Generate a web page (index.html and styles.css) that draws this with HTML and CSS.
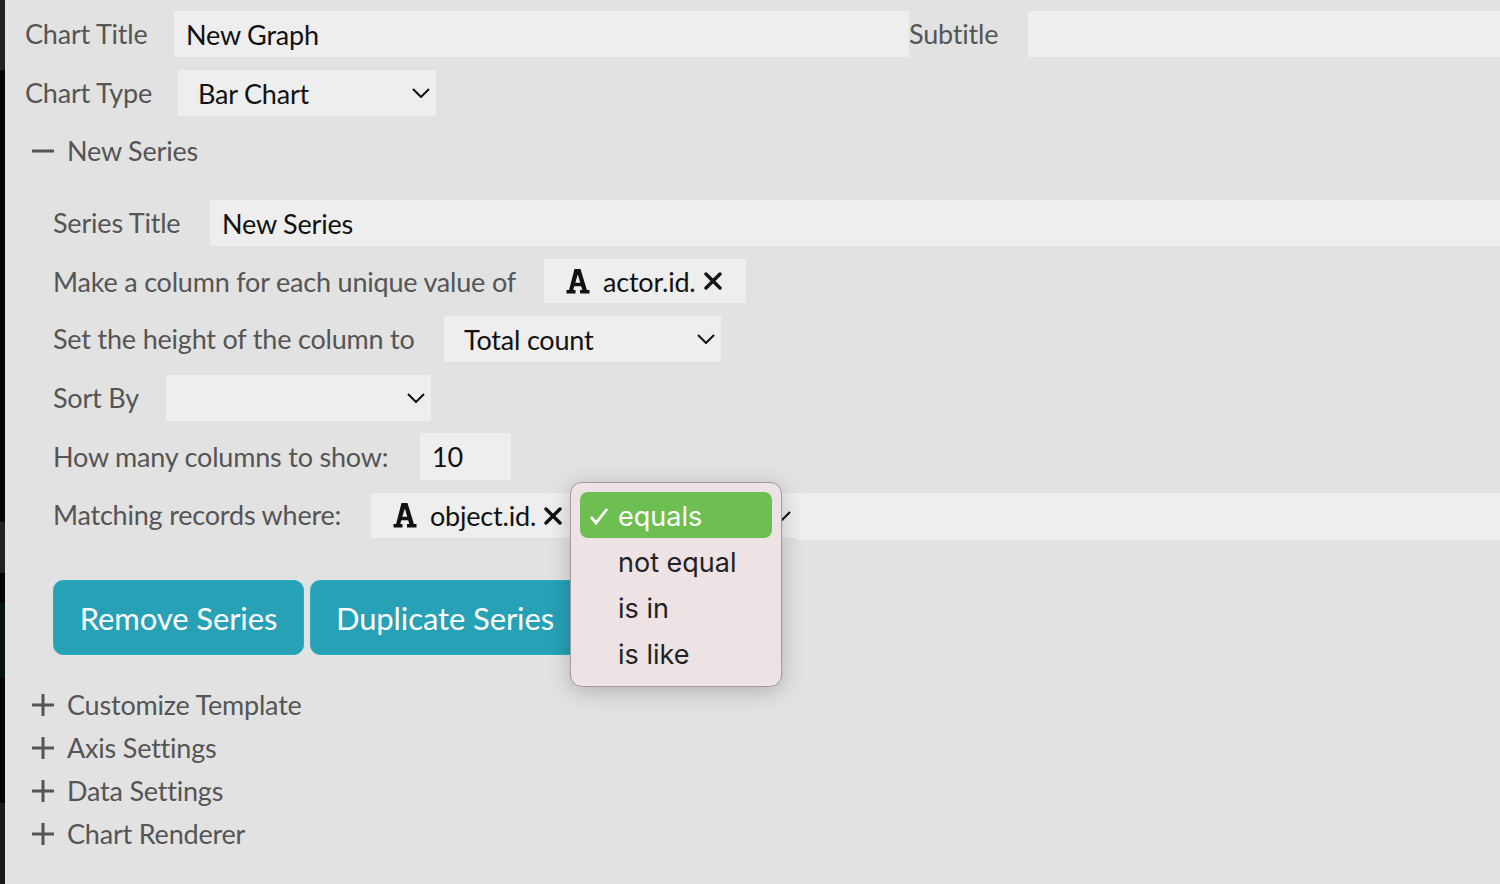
FILE: index.html
```html
<!DOCTYPE html>
<html lang="en">
<head>
<meta charset="utf-8">
<title>Chart editor</title>
<link rel="stylesheet" href="styles.css">
</head>
<body>
<div class="strip"></div>
<main class="panel">
  <div class="row row-top">
    <label class="label">Chart Title</label>
    <div class="field title-field">New Graph</div>
    <label class="label subtitle-label">Subtitle</label>
    <div class="field grow"></div>
  </div>
  <div class="row row-type">
    <label class="label">Chart Type</label>
    <div class="select type-select"><span>Bar Chart</span>
      <svg class="chev" viewBox="0 0 18 10"><path d="M1 1l8 8 8-8"/></svg></div>
  </div>
  <div class="toggle open">
    <svg class="pm" viewBox="0 0 22 22"><path d="M0 11h22"/></svg><span>New Series</span>
  </div>
  <section class="series">
    <div class="row s-title">
      <label class="label">Series Title</label>
      <div class="field grow">New Series</div>
    </div>
    <div class="row s-unique">
      <label class="label">Make a column for each unique value of</label>
      <div class="chip unique-chip">
        <svg class="font-icon" viewBox="0 0 24 25"><path fill-rule="evenodd" d="M8.5 0h6l6.4 21h2.6v3.500h-9.500V21h2.300l-1.100-3.800H8.300L7.200 21h2.300v3.500H.5V21h2.600zM9.300 13.700h5L11.800 5.500z"/></svg>
        <span>actor.id.</span>
        <svg class="x" viewBox="0 0 18 18"><path d="M2 2l14 14M16 2L2 16"/></svg>
      </div>
    </div>
    <div class="row s-height">
      <label class="label">Set the height of the column to</label>
      <div class="select height-select"><span>Total count</span>
        <svg class="chev" viewBox="0 0 18 10"><path d="M1 1l8 8 8-8"/></svg></div>
    </div>
    <div class="row s-sort">
      <label class="label">Sort By</label>
      <div class="select sort-select"><span></span>
        <svg class="chev" viewBox="0 0 18 10"><path d="M1 1l8 8 8-8"/></svg></div>
    </div>
    <div class="row s-count">
      <label class="label">How many columns to show:</label>
      <div class="field count-field">10</div>
    </div>
    <div class="row s-match">
      <label class="label">Matching records where:</label>
      <div class="match-group">
        <div class="match-chip">
          <svg class="font-icon" viewBox="0 0 24 25"><path fill-rule="evenodd" d="M8.5 0h6l6.4 21h2.6v3.500h-9.500V21h2.300l-1.100-3.800H8.300L7.200 21h2.300v3.500H.5V21h2.600zM9.300 13.700h5L11.800 5.500z"/></svg>
          <span>object.id.</span>
          <svg class="x" viewBox="0 0 18 18"><path d="M2 2l14 14M16 2L2 16"/></svg>
        </div>
        <svg class="chev" viewBox="0 0 18 10"><path d="M1 1l8 8 8-8"/></svg>
      </div>
      <div class="field grow match-value"></div>
    </div>
    <div class="buttons">
      <button class="btn btn-remove">Remove Series</button>
      <button class="btn btn-dup">Duplicate Series</button>
    </div>
  </section>
  <div class="collapsed">
    <div class="toggle"><svg class="pm" viewBox="0 0 22 22"><path d="M0 11h22M11 0v22"/></svg><span>Customize Template</span></div>
    <div class="toggle"><svg class="pm" viewBox="0 0 22 22"><path d="M0 11h22M11 0v22"/></svg><span>Axis Settings</span></div>
    <div class="toggle"><svg class="pm" viewBox="0 0 22 22"><path d="M0 11h22M11 0v22"/></svg><span>Data Settings</span></div>
    <div class="toggle"><svg class="pm" viewBox="0 0 22 22"><path d="M0 11h22M11 0v22"/></svg><span>Chart Renderer</span></div>
  </div>
</main>
<ul class="menu">
  <li class="item selected"><svg class="check" viewBox="0 0 20 18"><path d="M2 10l5 6L18 2"/></svg>equals</li>
  <li class="item">not equal</li>
  <li class="item">is in</li>
  <li class="item">is like</li>
</ul>
</body>
</html>
```
FILE: styles.css
```css
* { box-sizing: border-box; }
html, body { margin: 0; height: 100%; }
body {
  width: 1500px; height: 884px; overflow: hidden; display: flex;
  background: #e2e2e2; color: #111;
  font-family: "Lato", "Liberation Sans", sans-serif; font-size: 27px; letter-spacing: -0.2px;
}
.strip {
  flex: 0 0 5px;
  background: linear-gradient(#222 0 70px, #030507 70px 522px, #222 522px 573px, #030305 573px 603px, #04140c 603px 678px, #030305 678px 803px, #1a1a1a 803px);
}
.panel { flex: 1; min-width: 0; padding: 11px 0 0 20px; }
.row { display: flex; align-items: center; height: 46px; }
.label { color: #555; white-space: nowrap; padding-bottom: 2px; }
.field, .select, .chip {
  display: flex; align-items: center; height: 46px; background: #eee; color: #111; white-space: nowrap;
}
.field { padding-left: 12px; }
.grow { flex: 1; min-width: 0; margin-right: -5px; }
.row-top .label:first-child { width: 149px; }
.title-field { width: 735px; }
.subtitle-label { width: 119px; }
.row-type { margin-top: 13px; }
.row-type .label { width: 153px; }
.select { justify-content: space-between; padding: 0 6px 0 20px; }
.type-select { width: 258px; }
.chev { flex: none; width: 18px; height: 10px; fill: none; stroke: #111; stroke-width: 2; }
.toggle { display: flex; align-items: center; height: 43px; padding-left: 7px; color: #555; }
.toggle.open { margin-top: 13px; }
.pm { width: 22px; height: 22px; margin-right: 13px; fill: none; stroke: #555; stroke-width: 3; }
.series { padding: 28px 0 0 28px; }
.s-title .label { width: 157px; }
.s-unique { margin-top: 13px; height: 44px; }
.s-unique .label { width: 491px; padding-bottom: 0; }
.chip { height: 44px; width: 202px; padding-left: 22px; }
.font-icon { flex: none; width: 24px; height: 25px; margin-right: 13px; fill: #111; }
.x { flex: none; width: 18px; height: 18px; margin-left: 8px; fill: none; stroke: #111; stroke-width: 3.4; stroke-linecap: round; }
.s-height { margin-top: 13px; }
.s-height .label { width: 391px; }
.height-select { width: 277px; }
.s-sort { margin-top: 13px; }
.s-sort .label { width: 113px; }
.sort-select { width: 265px; }
.s-count { margin-top: 12px; height: 47px; }
.s-count .label { width: 367px; padding-bottom: 0; }
.count-field { width: 91px; height: 47px; }
.s-match { margin-top: 13px; align-items: flex-start; }
.s-match .label { width: 318px; line-height: 44px; }
.match-group {
  flex: none; width: 426px; height: 45px; display: flex; align-items: center; justify-content: space-between;
  background: #eee; padding: 0 6px 0 22px;
}
.match-chip { display: flex; align-items: center; }
.match-value { height: 47px; }
.buttons { display: flex; gap: 6px; margin-top: 41px; }
.btn {
  height: 75px; border: 1px solid #29b0c4; border-radius: 10px; background: #26a1b6; color: #fff;
  font: inherit; font-size: 31px; letter-spacing: -0.1px; padding: 0; cursor: pointer;
}
.btn-remove { width: 251px; }
.btn-dup { width: 270px; }
.collapsed { margin-top: 28px; }
.menu {
  position: absolute; left: 570px; top: 482px; width: 212px; height: 205px; margin: 0; padding: 9px;
  list-style: none; background: #ede3e5; border: 1px solid #a09b9c; border-radius: 12px;
  box-shadow: 0 4px 22px rgba(0,0,0,.22);
  font-family: "Inter", "Roboto", sans-serif; font-size: 27px; letter-spacing: 0; color: #222;
}
.item { position: relative; height: 46px; line-height: 49px; padding-left: 38px; border-radius: 8px; }
.selected { background: #6dbf51; color: #fff; }
.check { position: absolute; left: 9px; top: 15px; width: 20px; height: 18px; fill: none; stroke: #fff; stroke-width: 2.8; }
```
